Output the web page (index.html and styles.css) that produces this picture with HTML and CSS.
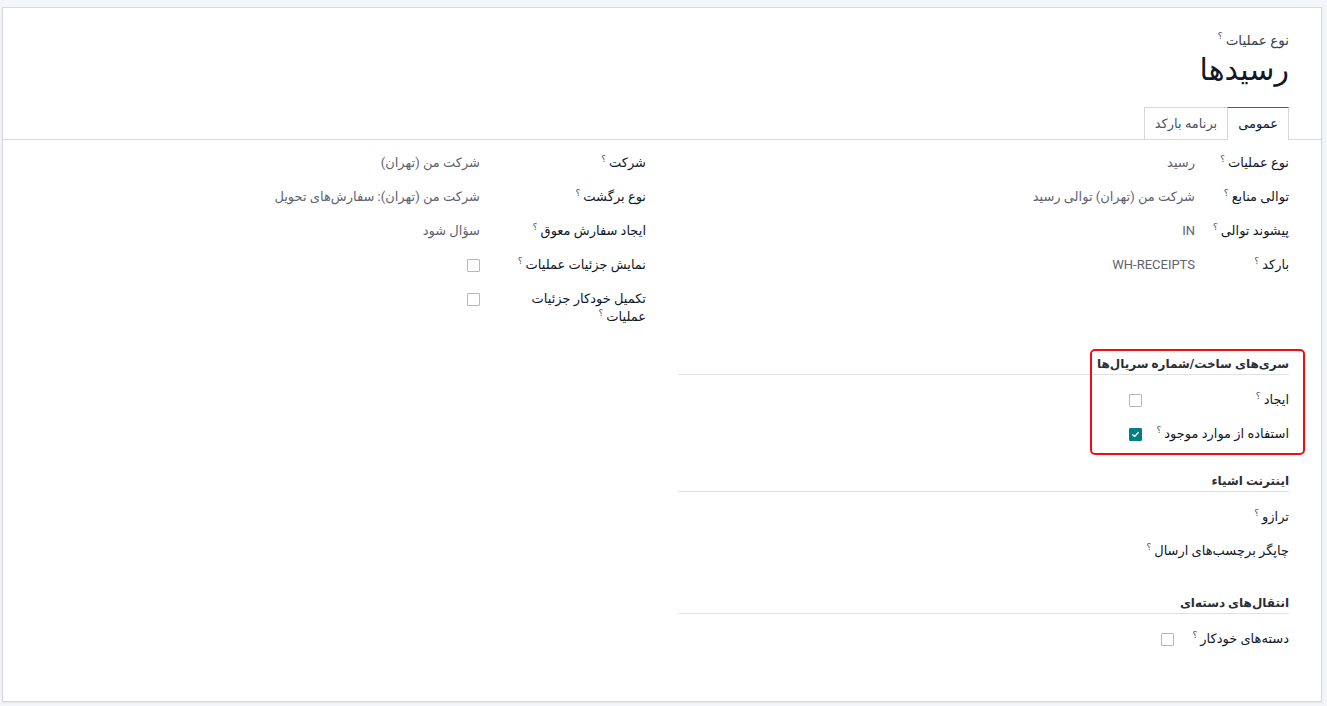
FILE: index.html
```html
<!DOCTYPE html>
<html lang="fa" dir="rtl">
<head>
    <meta charset="UTF-8">
    <title>رسیدها</title>
    <link rel="stylesheet" href="styles.css">
</head>
<body>
    <div class="sheet">
        <div class="sheet-head">
            <div class="kind">نوع عملیات<sup class="help">؟</sup></div>
            <h1 class="title">رسیدها</h1>
        </div>

        <div class="notebook">
            <ul class="tabs">
                <li class="tab active">عمومی</li>
                <li class="tab">برنامه بارکد</li>
            </ul>

            <div class="page">
                <!-- گروه اصلی: دو ستون -->
                <div class="cols">
                    <div class="grp grp-main">
                        <div class="lbl">نوع عملیات<sup class="help">؟</sup></div>
                        <div class="val">رسید</div>
                        <div class="lbl">توالی منابع<sup class="help">؟</sup></div>
                        <div class="val">شرکت من (تهران) توالی رسید</div>
                        <div class="lbl">پیشوند توالی<sup class="help">؟</sup></div>
                        <div class="val">IN</div>
                        <div class="lbl">بارکد<sup class="help">؟</sup></div>
                        <div class="val">WH-RECEIPTS</div>
                    </div>
                    <div class="grp grp-company">
                        <div class="lbl">شرکت<sup class="help">؟</sup></div>
                        <div class="val">شرکت من (تهران)</div>
                        <div class="lbl">نوع برگشت<sup class="help">؟</sup></div>
                        <div class="val">شرکت من (تهران): سفارش‌های تحویل</div>
                        <div class="lbl">ایجاد سفارش معوق<sup class="help">؟</sup></div>
                        <div class="val">سؤال شود</div>
                        <div class="lbl">نمایش جزئیات عملیات<sup class="help">؟</sup></div>
                        <div class="val"><span class="check"></span></div>
                        <div class="lbl lbl-wrap">تکمیل خودکار جزئیات عملیات<sup class="help">؟</sup></div>
                        <div class="val"><span class="check"></span></div>
                    </div>
                </div>

                <!-- سری ساخت -->
                <div class="side">
                    <div class="sep">سری‌های ساخت/شماره سریال‌ها</div>
                    <div class="grp grp-lots">
                        <div class="lbl">ایجاد<sup class="help">؟</sup></div>
                        <div class="val"><span class="check"></span></div>
                        <div class="lbl">استفاده از موارد موجود<sup class="help">؟</sup></div>
                        <div class="val">
                            <span class="check checked">
                                <svg viewBox="0 0 12 12" width="9" height="9"><path d="M2.2 6.3 L4.8 8.6 L9.8 3.4" fill="none" stroke="#fff" stroke-width="1.8" stroke-linecap="round" stroke-linejoin="round"/></svg>
                            </span>
                        </div>
                    </div>
                    <div class="annot"></div>
                </div>

                <!-- اینترنت اشیاء -->
                <div class="side">
                    <div class="sep">اینترنت اشیاء</div>
                    <div class="grp grp-iot">
                        <div class="lbl">ترازو<sup class="help">؟</sup></div>
                        <div class="lbl">چاپگر برچسب‌های ارسال<sup class="help">؟</sup></div>
                    </div>
                </div>

                <!-- انتقال دسته‌ای -->
                <div class="side side-last">
                    <div class="sep">انتقال‌های دسته‌ای</div>
                    <div class="grp grp-batch">
                        <div class="lbl">دسته‌های خودکار<sup class="help">؟</sup></div>
                        <div class="val"><span class="check"></span></div>
                    </div>
                </div>
            </div>
        </div>
    </div>
</body>
</html>
```

FILE: styles.css
```css
html, body {
    margin: 0;
    padding: 0;
    height: 100%;
}
body {
    background-color: #f4f5f8;
    font-family: Roboto, "DejaVu Sans", sans-serif;
    font-size: 13px;
    color: #111827;
    padding: 7px 5px 4px 2px;
    box-sizing: border-box;
    display: flex;
    overflow: hidden;
}
.sheet {
    flex: 1;
    background-color: #fff;
    border: 1px solid #d5d7db;
    padding: 0 32px;
    box-shadow: 0 1px 2px rgba(0, 0, 0, 0.06);
}
/* Cabecera */
.sheet-head {
    padding-top: 23px;
}
.kind {
    line-height: 18px;
    font-size: 13.5px;
    color: #374151;
}
.title {
    margin: 3px 0 19px;
    font-size: 30px;
    font-weight: normal;
    line-height: 36px;
    color: #111827;
}
.help {
    font-size: 9px;
    line-height: 9px;
    color: #4b5563;
    margin-right: 3px;
    vertical-align: top;
    position: relative;
    top: 1px;
}
/* Pestañas */
.notebook {
    margin: 0 -32px;
}
.tabs {
    list-style: none;
    margin: 0;
    padding: 0 32px;
    display: flex;
    border-bottom: 1px solid #d5d7db;
}
.tab {
    height: 31px;
    line-height: 31px;
    padding: 0 10px;
    color: #4b5563;
    border: 1px solid #d5d7db;
    border-bottom: none;
    margin-bottom: -1px;
    background-color: #fff;
}
.tab.active {
    color: #111827;
    border-top-color: #714b67;
    height: 32px;
}
.tab + .tab {
    border-right: none;
}
.page {
    padding: 14px 32px 0;
}
/* Grupos */
.cols {
    display: flex;
    align-items: flex-start;
    gap: 32px;
}
.cols .grp {
    flex: 1;
}
.grp {
    display: grid;
    row-gap: 16px;
    line-height: 18px;
    align-items: start;
    align-content: start;
}
.grp-main { grid-template-columns: 94px 1fr; }
.grp-company { grid-template-columns: 166px 1fr; }
.grp-lots { grid-template-columns: 147px 1fr; }
.grp-iot { grid-template-columns: 1fr; }
.grp-batch { grid-template-columns: 115px 1fr; }
.lbl {
    color: #111827;
    font-weight: 500;
    white-space: nowrap;
}
.lbl-wrap {
    white-space: normal;
    padding-left: 40px;
}
.val {
    color: #5f636e;
}
.check {
    display: flex;
    align-items: center;
    justify-content: center;
    width: 11px;
    height: 11px;
    margin-top: 3px;
    border: 1px solid #b4b8be;
    border-radius: 1px;
}
.check.checked {
    background-color: #017e84;
    border-color: #017e84;
}
/* Secciones de la derecha */
.side {
    width: calc(50% - 16px);
    margin-top: 29px;
    position: relative;
}
.side-last {
    margin-top: 34px;
}
.sep {
    font-size: 12px;
    font-weight: bold;
    line-height: 18px;
    padding-bottom: 1px;
    border-bottom: 1px solid #dee2e6;
    margin-bottom: 16px;
    color: #2b2f36;
}
/* Recuadro rojo de anotación */
.annot {
    position: absolute;
    top: -6px;
    right: -16px;
    width: 215px;
    height: 106px;
    box-sizing: border-box;
    border: 2px solid #f20d14;
    border-radius: 5px;
}
```
